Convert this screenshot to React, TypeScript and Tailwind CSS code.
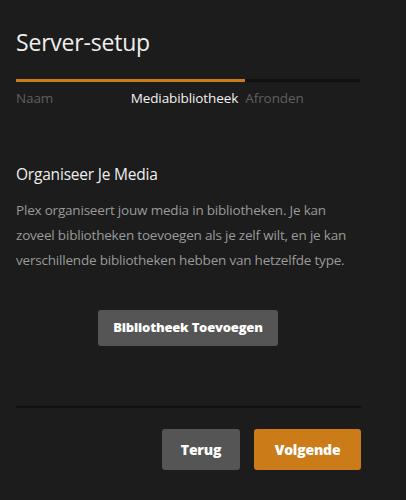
const steps = [
  { label: 'Naam', active: false },
  { label: 'Mediabibliotheek', active: true },
  { label: 'Afronden', active: false },
]

export default function App() {
  return (
    <div
      className="w-[406px] h-[500px] bg-[#1c1c1c] overflow-hidden"
      style={{ fontFamily: '"Open Sans", "Noto Sans", sans-serif' }}
    >
      <div className="px-4 pt-[26px]">
        <h1 className="text-[23px] leading-[32px] text-[#eeeeee] tracking-[-0.2px]">Server-setup</h1>

        <div className="mt-[21px] w-[344px] h-[3px] bg-[#111111] flex">
          <div className="w-[229px] h-full bg-[#cc7b19]" />
        </div>

        <div className="mt-[6px] w-[344px] grid grid-cols-3 text-[13.5px] leading-[20px]">
          {steps.map((step) => (
            <div
              key={step.label}
              className={
                step.active
                  ? 'text-[#f2f2f2] tracking-[-0.1px]'
                  : 'text-[#5f5f5f] tracking-[-0.1px]'
              }
            >
              {step.label}
            </div>
          ))}
        </div>

        <h2 className="mt-[55px] text-[15.5px] leading-[22px] text-[#eeeeee] tracking-[-0.2px]">
          Organiseer Je Media
        </h2>
        <p className="mt-[13px] w-[350px] text-[13.5px] leading-[25px] text-[#9a9a9a] tracking-[-0.2px]">
          Plex organiseert jouw media in bibliotheken. Je kan zoveel bibliotheken toevoegen als je zelf wilt, en je kan verschillende bibliotheken hebben van hetzelfde type.
        </p>

        <div className="w-[344px] flex justify-center mt-[37px]">
          <button className="w-[180px] h-[36px] rounded-[3px] bg-[#555555] text-white text-[13px] font-extrabold tracking-[-0.2px]">
            Bibliotheek Toevoegen
          </button>
        </div>

        <div className="mt-[60px] w-[345px] h-[2px] bg-[#111111]" />

        <div className="mt-[21px] w-[345px] flex justify-end gap-[14px]">
          <button className="w-[78px] h-[41px] rounded-[3px] bg-[#555555] text-white text-[14px] font-extrabold tracking-[-0.2px]">
            Terug
          </button>
          <button className="w-[107px] h-[41px] rounded-[3px] bg-[#cc7b19] text-white text-[14px] font-extrabold tracking-[-0.2px]">
            Volgende
          </button>
        </div>
      </div>
    </div>
  )
}
